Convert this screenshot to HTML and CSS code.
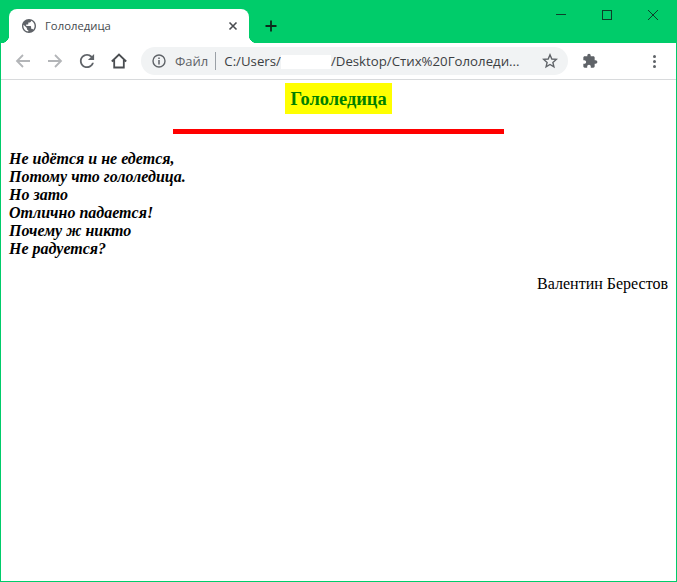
FILE: index.html
```html
<!DOCTYPE html>
<html lang="ru">
<head>
    <meta charset="UTF-8">
    <title>Гололедица</title>
    <link rel="stylesheet" href="styles.css">
</head>
<body>
    <div class="window">
        <!-- Вкладки и кнопки окна -->
        <div class="titlebar">
            <div class="tab">
                <svg class="globe" width="14" height="14" viewBox="2 2 20 20">
                    <path d="M12 2C6.48 2 2 6.48 2 12s4.48 10 10 10 10-4.48 10-10S17.52 2 12 2zm-1 17.930c-3.950-.49-7-3.850-7-7.930 0-.62.08-1.210.21-1.790L9 15v1c0 1.100.9 2 2 2v1.930zm6.900-2.540c-.26-.81-1-1.390-1.900-1.390h-1v-3c0-.55-.45-1-1-1H8v-2h2c.55 0 1-.45 1-1V7h2c1.100 0 2-.9 2-2v-.41c2.930 1.190 5 4.060 5 7.410 0 2.080-.8 3.970-2.100 5.390z" fill="#5f6368"/>
                </svg>
                <span class="tab-title">Гололедица</span>
                <svg class="tab-close" width="10" height="10" viewBox="0 0 10 10">
                    <path d="M1.500 1.500 L8.500 8.500 M8.500 1.500 L1.500 8.500" stroke="#4a4d51" stroke-width="1.600"/>
                </svg>
            </div>
            <svg class="new-tab" width="12" height="12" viewBox="0 0 12 12">
                <path d="M6 0.500 V11.500 M0.500 6 H11.500" stroke="#0e2a1c" stroke-width="1.800"/>
            </svg>
            <div class="win-buttons">
                <svg width="12" height="12" viewBox="0 0 12 12"><path d="M1 5.500 H11" stroke="#0d3f2a"/></svg>
                <svg width="12" height="12" viewBox="0 0 12 12"><rect x="1.500" y="1.500" width="9" height="9" fill="none" stroke="#0d3f2a"/></svg>
                <svg width="12" height="12" viewBox="0 0 12 12"><path d="M1 1 L11 11 M11 1 L1 11" stroke="#0d3f2a"/></svg>
            </div>
        </div>

        <!-- Адресная строка -->
        <div class="toolbar">
            <svg class="nav" width="16" height="16" viewBox="0 0 16 16">
                <path d="M15 8 H2 M8 2 L2 8 L8 14" fill="none" stroke="#b3b5b8" stroke-width="1.800"/>
            </svg>
            <svg class="nav" width="16" height="16" viewBox="0 0 16 16">
                <path d="M1 8 H14 M8 2 L14 8 L8 14" fill="none" stroke="#b3b5b8" stroke-width="1.800"/>
            </svg>
            <svg class="nav" width="16" height="16" viewBox="3 3 18 18">
                <path d="M17.650 6.350C16.200 4.900 14.210 4 12 4c-4.420 0-7.990 3.580-7.990 8s3.570 8 7.990 8c3.730 0 6.840-2.550 7.730-6h-2.080c-.82 2.330-3.040 4-5.650 4-3.310 0-6-2.690-6-6s2.690-6 6-6c1.660 0 3.140.69 4.220 1.780L13 11h7V4l-2.350 2.350z" fill="#5f6368"/>
            </svg>
            <svg class="nav" width="16" height="16" viewBox="0 0 16 16">
                <path d="M0.800 8.500 L8 1.500 L15.200 8.500 M3.200 7 V14.500 H12.800 V7" fill="none" stroke="#4a4d51" stroke-width="1.800"/>
            </svg>
            <div class="omnibox">
                <svg class="info" width="14" height="14" viewBox="0 0 14 14">
                    <circle cx="7" cy="7" r="6" fill="none" stroke="#5f6368" stroke-width="1.400"/>
                    <path d="M7 6 V10.500 M7 3.400 V5" stroke="#5f6368" stroke-width="1.500"/>
                </svg>
                <span class="scheme">Файл</span>
                <span class="divider"></span>
                <span class="url">C:/Users/<span class="hidden-name"></span>/Desktop/Стих%20Гололеди...</span>
                <svg class="star" width="16" height="16" viewBox="0 0 16 16">
                    <path d="M8 1.800 L9.800 6 L14.300 6.400 L10.900 9.400 L11.900 13.900 L8 11.500 L4.100 13.900 L5.100 9.400 L1.700 6.400 L6.200 6 Z" fill="none" stroke="#5f6368" stroke-width="1.400"/>
                </svg>
            </div>
            <svg class="puzzle" width="16" height="16" viewBox="0 0 24 24">
                <path d="M20.500 11H19V7c0-1.100-.9-2-2-2h-4V3.500C13 2.120 11.880 1 10.500 1S8 2.120 8 3.500V5H4c-1.100 0-1.990.9-1.990 2v3.800H3.500c1.490 0 2.700 1.210 2.700 2.700s-1.210 2.700-2.700 2.700H2V20c0 1.100.9 2 2 2h3.800v-1.500c0-1.490 1.210-2.700 2.700-2.700 1.490 0 2.700 1.210 2.700 2.700V22H17c1.100 0 2-.9 2-2v-4h1.500c1.380 0 2.500-1.120 2.500-2.500S21.880 11 20.500 11z" fill="#5f6368"/>
            </svg>
            <div class="dots"><i></i><i></i><i></i></div>
        </div>

        <!-- Страница -->
        <div class="page">
            <h1 class="title"><span>Гололедица</span></h1>
            <hr class="line">
            <p class="poem">
                Не идётся и не едется,<br>
                Потому что гололедица.<br>
                Но зато<br>
                Отлично падается!<br>
                Почему ж никто<br>
                Не радуется?
            </p>
            <p class="author">Валентин Берестов</p>
        </div>
    </div>
</body>
</html>
```

FILE: styles.css
```css
html, body {
    margin: 0;
    height: 100%;
    overflow: hidden;
}

.window {
    height: 582px;
    box-sizing: border-box;
    display: flex;
    flex-direction: column;
    background: #ffffff;
    border: 1px solid #00cc6a;
    border-top: none;
}

/* Вкладки */
.titlebar {
    height: 43px;
    flex: none;
    display: flex;
    align-items: flex-end;
    background: #00cc6a;
    padding-left: 8px;
}

.tab {
    position: relative;
    width: 240px;
    height: 34px;
    box-sizing: border-box;
    display: flex;
    align-items: center;
    padding: 0 11px 0 13px;
    background: #ffffff;
    border-radius: 8px 8px 0 0;
}

/* Скругления у основания вкладки */
.tab::before,
.tab::after {
    content: "";
    position: absolute;
    bottom: 0;
    width: 8px;
    height: 8px;
}

.tab::before {
    left: -8px;
    background: radial-gradient(circle at 0 0, #00cc6a 8px, #ffffff 8.500px);
}

.tab::after {
    right: -8px;
    background: radial-gradient(circle at 100% 0, #00cc6a 8px, #ffffff 8.500px);
}

.tab-title {
    flex: 1;
    margin: 0 0 1px 9px;
    font: 11.300px "Open Sans", "Noto Sans", sans-serif;
    color: #45494d;
}

.new-tab {
    margin: 0 0 11px 16px;
}

.win-buttons {
    margin: 0 17px 22px auto;
    display: flex;
    gap: 34px;
}

/* Адресная строка */
.toolbar {
    height: 37px;
    flex: none;
    box-sizing: border-box;
    display: flex;
    align-items: center;
    padding-left: 14px;
    border-bottom: 1px solid #d8dadc;
}

.nav {
    margin-right: 16px;
}

.omnibox {
    width: 427px;
    height: 28px;
    margin-left: -2px;
    box-sizing: border-box;
    display: flex;
    align-items: center;
    padding: 0 10px 0 11px;
    background: #f1f3f4;
    border-radius: 14px;
    font: 13.240px "Open Sans", "Noto Sans", sans-serif;
}

.scheme {
    margin-left: 9px;
    font-size: 13px;
    color: #5f6368;
}

.divider {
    width: 1px;
    height: 18px;
    margin: 0 8px 0 7px;
    background: #9aa0a6;
}

.url {
    flex: 1;
    white-space: nowrap;
    color: #3c4043;
}

.hidden-name {
    display: inline-block;
    width: 50px;
    height: 14px;
    vertical-align: middle;
    background: #ffffff;
}

.puzzle {
    margin-left: 14px;
}

.dots {
    margin-left: 55px;
    display: flex;
    flex-direction: column;
    gap: 2px;
}

.dots i {
    width: 3px;
    height: 3px;
    border-radius: 50%;
    background: #5f6368;
}

/* Стих */
.page {
    flex: 1;
    padding: 3px 8px 0;
    font-family: "Liberation Serif", serif;
    font-size: 16px;
    color: #000000;
}

.title {
    margin: 0;
    text-align: center;
    font-size: 18.400px;
    line-height: 30px;
    color: #008000;
}

.title span {
    display: inline-block;
    padding: 1px 5px 0;
    background: #ffff00;
}

.line {
    width: 331px;
    height: 5px;
    margin: 15px auto 0;
    border: none;
    background: #ff0000;
}

.poem {
    margin: 16px 0 0;
    font-weight: bold;
    font-style: italic;
    line-height: 18px;
}

.author {
    margin: 17px 0 0;
    text-align: right;
    line-height: 18px;
}
```
